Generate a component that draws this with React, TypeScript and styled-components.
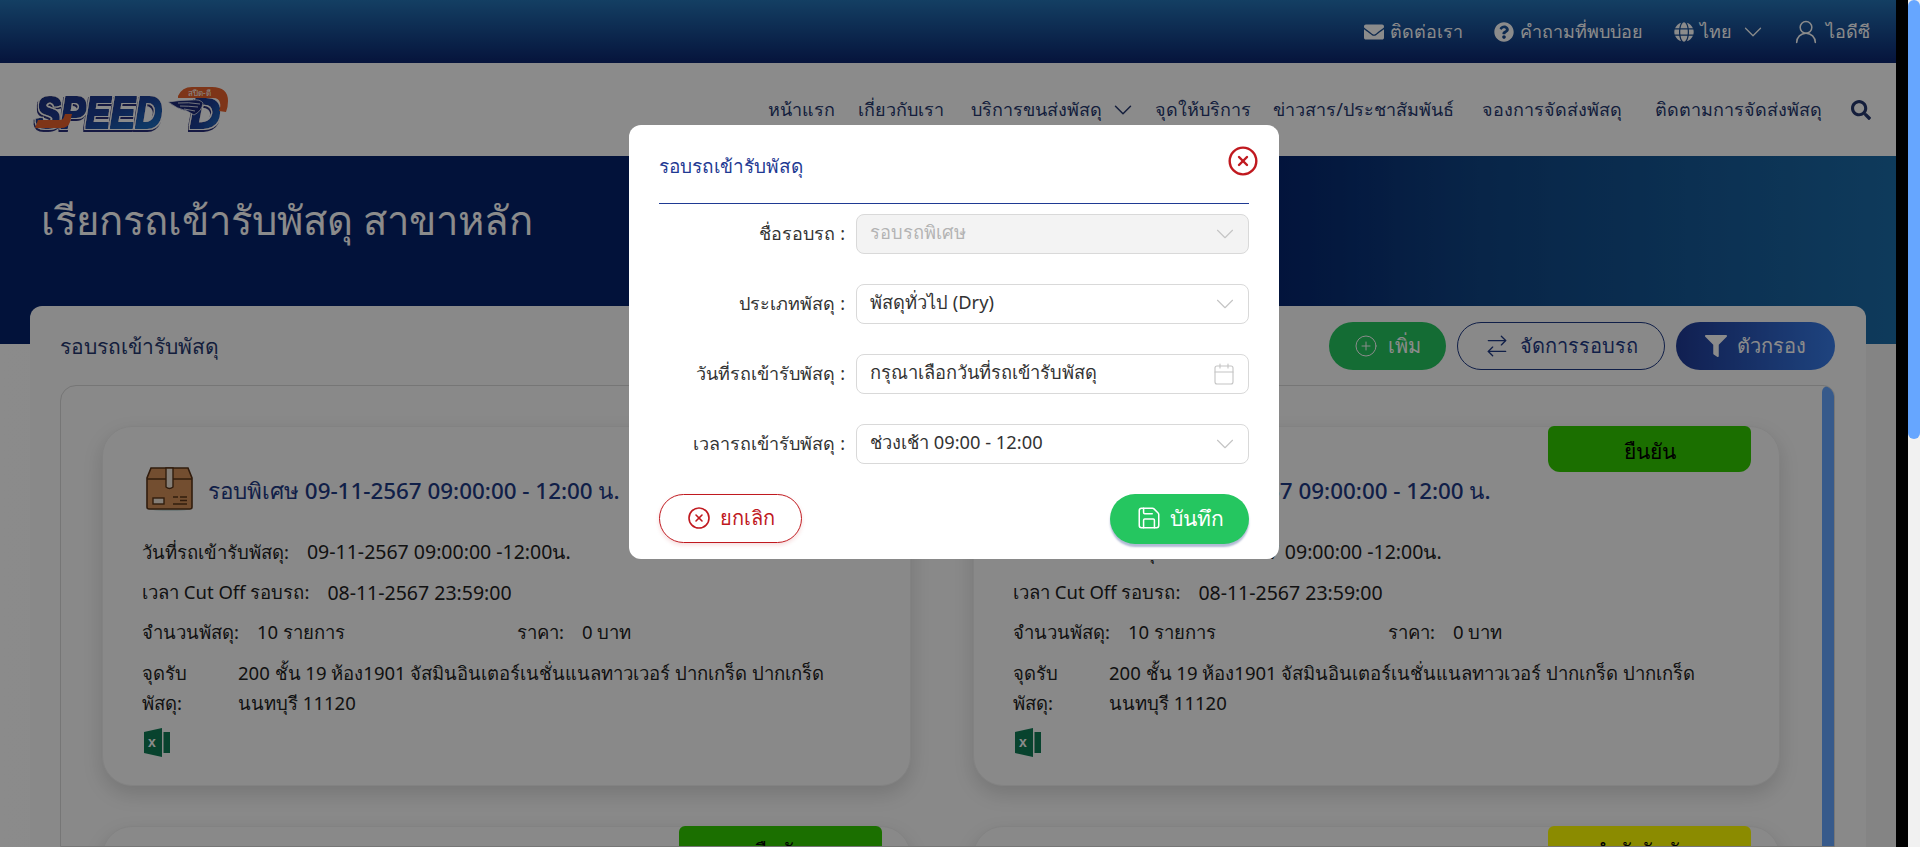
import { ArrowRightLeft, Calendar, ChevronDown, CirclePlus, Save, UserRound, XCircle } from 'lucide-react';
import type { ReactElement, ReactNode } from 'react';
import { FaEnvelope, FaFilter, FaGlobe, FaQuestionCircle, FaSearch } from 'react-icons/fa';
import styled, { createGlobalStyle } from 'styled-components';

const GlobalStyle = createGlobalStyle`
	html,
	body {
		margin: 0;
		height: 100%;
		overflow: hidden;
		background: #fff;
		font-family: 'Noto Sans', 'Open Sans', sans-serif;
	}
	* {
		box-sizing: border-box;
	}
`;

const Shell = styled.div`
	display: flex;
	height: 847px;
	overflow: hidden;
`;

const Stage = styled.div`
	position: relative;
	display: flex;
	width: 1908px;
	height: 847px;
	background: #000;
`;

const Page = styled.div`
	width: 1896px;
	height: 847px;
	overflow: hidden;
	background: linear-gradient(90deg, #fff, #f2f2f2);
	display: flex;
	flex-direction: column;
`;

const WindowScroll = styled.div`
	width: 12px;
	background: #f1f1f1;
`;

const WindowThumb = styled.div`
	height: 439px;
	background: #66a6ff;
	border-radius: 6px;
`;

const TopBar = styled.div`
	flex: none;
	height: 63px;
	display: flex;
	justify-content: flex-end;
	align-items: center;
	gap: 31px;
	padding-right: 26px;
	background: linear-gradient(180deg, #2574b6, #0b256e);
	color: #fff;
	font-size: 18px;
`;

const TopItem = styled.div`
	display: flex;
	align-items: center;
	gap: 6px;
	white-space: nowrap;
`;

const WideChevron = styled(ChevronDown)`
	margin-right: -7px;
`;

const Nav = styled.div`
	flex: none;
	height: 93px;
	display: flex;
	justify-content: space-between;
	align-items: center;
	padding: 0 25px 0 32px;
	background: #fff;
`;

const NavList = styled.div`
	display: flex;
	align-items: center;
	gap: 26px;
	color: #26386f;
	font-size: 18px;
	white-space: nowrap;
`;

const NavItem = styled.span<{ $width?: number }>`
	display: flex;
	align-items: center;
	justify-content: center;
	gap: 4px;
	width: ${(p) => (p.$width ? `${p.$width}px` : 'auto')};
`;

const Hero = styled.div`
	flex: none;
	height: 188px;
	padding: 37px 0 0 41px;
	background: linear-gradient(90deg, #04216b 66%, #0f4484 78%, #1b6ca8 100%);
	color: #fff;
	font-size: 40px;
	font-weight: 500;
	line-height: 54px;
`;

const Panel = styled.div`
	flex: 1;
	min-height: 0;
	display: flex;
	flex-direction: column;
	margin: -38px 30px 0;
	padding: 16px 31px 0 30px;
	background: #fbfbfb;
	border-radius: 12px 12px 0 0;
`;

const PanelHead = styled.div`
	flex: none;
	display: flex;
	justify-content: space-between;
	align-items: center;
	height: 48px;
	margin-bottom: 15px;
`;

const PanelTitle = styled.div`
	color: #26386f;
	font-size: 21px;
`;

const PanelActions = styled.div`
	display: flex;
	gap: 11px;
`;

const ActionButton = styled.div<{ $kind: 'add' | 'manage' | 'filter' }>`
	height: 48px;
	display: flex;
	align-items: center;
	justify-content: center;
	gap: 10px;
	border-radius: 24px;
	font-size: 20px;
	width: ${(p) => (p.$kind === 'add' ? '117px' : p.$kind === 'manage' ? '208px' : '159px')};
	color: ${(p) => (p.$kind === 'manage' ? '#1f3a85' : '#fff')};
	border: ${(p) => (p.$kind === 'manage' ? '1px solid #1f3a85' : 'none')};
	background: ${(p) =>
		p.$kind === 'add'
			? '#25c660'
			: p.$kind === 'filter'
				? 'linear-gradient(90deg, #1f3a95, #387ce8)'
				: 'transparent'};
`;

const ListBox = styled.div`
	flex: 1;
	min-height: 0;
	display: flex;
	overflow: hidden;
	border: 1px solid #d8d8d8;
	border-radius: 16px 12px 0 0;
`;

const CardGrid = styled.div`
	flex: 1;
	display: grid;
	grid-template-columns: 809px 807px;
	grid-auto-rows: 360px;
	column-gap: 62px;
	row-gap: 40px;
	padding: 40px 0 0 41px;
`;

const ListThumb = styled.div`
	flex: none;
	width: 12px;
	background: #66a6ff;
	border-radius: 6px 6px 0 0;
`;

const Card = styled.div`
	position: relative;
	padding: 40px 30px 0 39px;
	border: 1px solid #efefef;
	border-radius: 30px;
	background: #fbfbfb;
	box-shadow: 0 8px 20px rgba(0, 0, 0, 0.14);
	color: #222;
	font-size: 18.5px;
`;

const Badge = styled.div<{ $tone: 'green' | 'yellow' }>`
	position: absolute;
	top: -1px;
	right: 28px;
	width: 203px;
	height: 46px;
	display: flex;
	align-items: center;
	justify-content: center;
	padding-top: 5px;
	border-radius: 6px 6px 12px 12px;
	font-size: 21px;
	color: #000;
	background: ${(p) => (p.$tone === 'green' ? '#33cc00' : '#ffff00')};
`;

const CardHead = styled.div`
	display: flex;
	align-items: center;
	gap: 15px;
	height: 43px;
	margin: 0 0 23px 4px;
`;

const CardTitle = styled.div`
	padding-top: 4px;
	color: #1f3a85;
	font-size: 22.4px;
	font-weight: 500;
	white-space: nowrap;
`;

const InfoRow = styled.div`
	height: 40px;
	display: flex;
	align-items: center;
	gap: 18px;
	padding-bottom: 2px;
	white-space: nowrap;
`;

const DateValue = styled.span`
	font-size: 19.5px;
`;

const HalfRow = styled.div`
	height: 40px;
	display: grid;
	grid-template-columns: 375px 1fr;
	align-items: center;
`;

const AddressRow = styled.div`
	display: grid;
	grid-template-columns: 96px 1fr;
	margin-top: 5px;
	line-height: 30px;
`;

const ExcelWrap = styled.div`
	margin: 10px 0 0 2px;
`;

const Overlay = styled.div`
	position: absolute;
	inset: 0;
	display: flex;
	justify-content: center;
	align-items: flex-start;
	padding-top: 125px;
	background: rgba(0, 0, 0, 0.455);
`;

const Modal = styled.div`
	position: relative;
	width: 650px;
	height: 434px;
	padding: 0 30px;
	background: #fff;
	border-radius: 12px;
`;

const ModalHead = styled.div`
	height: 79px;
	display: flex;
	align-items: center;
	padding-top: 3px;
	border-bottom: 1px solid #1f3a93;
	color: #1f3a93;
	font-size: 19px;
`;

const CloseIcon = styled.div`
	position: absolute;
	top: 20px;
	right: 20px;
	width: 32px;
	height: 32px;
	color: #c0191f;
`;

const Form = styled.div`
	display: flex;
	flex-direction: column;
	gap: 30px;
	padding-top: 10px;
`;

const FormRow = styled.div`
	display: grid;
	grid-template-columns: 186px 1fr;
	column-gap: 11px;
	align-items: center;
`;

const FormLabel = styled.div`
	padding-bottom: 2px;
	text-align: right;
	color: #333;
	font-size: 18px;
	white-space: nowrap;
`;

const Field = styled.div<{ $disabled?: boolean }>`
	height: 40px;
	display: flex;
	justify-content: space-between;
	align-items: center;
	padding: 0 8px 0 13px;
	border: 1px solid #d9d9d9;
	border-radius: 8px;
	font-size: 18.3px;
	color: ${(p) => (p.$disabled ? '#b3b3b3' : '#333')};
	background: ${(p) => (p.$disabled ? '#f3f3f3' : '#fff')};
`;

const FieldText = styled.span`
	padding-bottom: 3px;
`;

const FieldIcon = styled.span`
	display: flex;
	color: #c4c4c4;
`;

const CalendarSlot = styled(FieldIcon)`
	margin-right: 4px;
`;

const ModalFoot = styled.div`
	display: flex;
	justify-content: space-between;
	margin-top: 30px;
`;

const CancelButton = styled.div`
	width: 143px;
	height: 49px;
	display: flex;
	align-items: center;
	justify-content: center;
	gap: 9px;
	padding-bottom: 2px;
	border: 1px solid #c0191f;
	border-radius: 25px;
	color: #c0191f;
	font-size: 20px;
	box-shadow: 0 2px 4px rgba(196, 22, 28, 0.15);
`;

const SaveButton = styled.div`
	width: 139px;
	height: 50px;
	display: flex;
	align-items: center;
	justify-content: center;
	gap: 8px;
	padding-bottom: 2px;
	border-radius: 25px;
	color: #fff;
	font-size: 21px;
	background: #25c660;
	box-shadow: 0 3px 2px rgba(31, 58, 133, 0.35);
`;

function Logo(): ReactElement {
	return (
		<svg width="198" height="46" viewBox="0 0 198 46" aria-label="Speed-D">
			<defs>
				<linearGradient id="logoBlue" x1="0" y1="0" x2="1" y2="1">
					<stop offset="0" stopColor="#1c2a78" />
					<stop offset="0.55" stopColor="#1e3f96" />
					<stop offset="1" stopColor="#1f7fd0" />
				</linearGradient>
				<filter id="logoEdge" x="-6%" y="-10%" width="112%" height="130%">
					<feMorphology in="SourceGraphic" operator="dilate" radius="0.7" result="fat" />
					<feMorphology in="SourceAlpha" operator="dilate" radius="2.2" result="halo" />
					<feFlood floodColor="#ffffff" />
					<feComposite in2="halo" operator="in" result="white" />
					<feOffset in="halo" dx="-1" dy="1.6" result="shifted" />
					<feFlood floodColor="#2a2f7a" />
					<feComposite in2="shifted" operator="in" result="shadow" />
					<feMerge>
						<feMergeNode in="shadow" />
						<feMergeNode in="white" />
						<feMergeNode in="fat" />
					</feMerge>
				</filter>
			</defs>
			<text
				x="4"
				y="41"
				fontFamily="Liberation Sans, sans-serif"
				fontSize="44"
				fontWeight="700"
				fontStyle="italic"
				fill="url(#logoBlue)"
				filter="url(#logoEdge)"
				textLength="126"
				lengthAdjust="spacingAndGlyphs"
			>
				SPEED
			</text>
			<path d="M3 41 l3 -8 h22 q3 0 4 -3 l1 -3 h7 l-2 8 q-2 6 -9 6 z" fill="#e8622c" />
			<text
				x="158"
				y="41"
				fontFamily="Liberation Sans, sans-serif"
				fontSize="42"
				fontWeight="700"
				fontStyle="italic"
				fill="url(#logoBlue)"
				filter="url(#logoEdge)"
			>
				D
			</text>
			<path d="M146 9 q4 -9 14 -9 h20 q16 0 16 14 q0 6 -2 11 l-7 -1 q2 -5 1 -8 q-1 -5 -7 -5 h-35 z" fill="#e8622c" />
			<text x="156" y="9" fontFamily="Noto Sans, sans-serif" fontSize="8" fill="#fff">
				สปีด-ดี
			</text>
			<path d="M136 15 q12 -2 24 -2 q8 -1 11 3 q-1 8 -9 12 l-7 -4 q-10 -2 -19 -9 z" fill="#1c2a78" stroke="#fff" strokeWidth="0.7" />
			<path d="M146 16 q10 -1 22 1 M148 19 q8 0 18 1 M152 22 q6 1 11 2" stroke="#fff" strokeWidth="0.8" fill="none" />
		</svg>
	);
}

function BoxIcon(): ReactElement {
	return (
		<svg width="47" height="44" viewBox="0 0 47 44">
			<ellipse cx="24" cy="42" rx="20" ry="2" fill="#9ec4c4" opacity="0.5" />
			<path d="M5 1 h37 l4 10 v29 q0 2 -2 2 h-41 q-2 0 -2 -2 v-29 z" fill="#d49058" stroke="#5a3418" strokeWidth="1.6" />
			<path d="M1 12 h45" stroke="#5a3418" strokeWidth="1.6" />
			<path d="M20 1 h7 v19 q-3.5 3 -7 0 z" fill="#f2e8da" stroke="#5a3418" strokeWidth="1.4" />
			<rect x="7" y="31" width="11" height="6" fill="#f2e8da" stroke="#5a3418" strokeWidth="1.4" />
			<path d="M27 30 h5 M34 30 h7 M34 33.5 h7 M27 37 h14" stroke="#5a3418" strokeWidth="1.4" />
		</svg>
	);
}

function ExcelIcon(): ReactElement {
	return (
		<svg width="26" height="29" viewBox="0 0 26 29">
			<path d="M0 4 L18 0 V29 L0 25 Z" fill="#0f7b55" />
			<path d="M19.5 4 H26 V25 H19.5 Z" fill="#0f7b55" />
			<text x="4" y="19" fontFamily="Liberation Sans, sans-serif" fontSize="14" fontWeight="700" fill="#fff">
				x
			</text>
		</svg>
	);
}

function Chevron(): ReactElement {
	return (
		<FieldIcon>
			<ChevronDown size={30} strokeWidth={0.9} />
		</FieldIcon>
	);
}

interface RoundCardProps {
	badge?: ReactNode;
}

function RoundCard({ badge }: RoundCardProps): ReactElement {
	return (
		<Card>
			{badge}
			<CardHead>
				<BoxIcon />
				<CardTitle>รอบพิเศษ 09-11-2567 09:00:00 - 12:00 น.</CardTitle>
			</CardHead>
			<InfoRow>
				<span>วันที่รถเข้ารับพัสดุ:</span>
				<DateValue>09-11-2567 09:00:00 -12:00น.</DateValue>
			</InfoRow>
			<InfoRow>
				<span>เวลา Cut Off รอบรถ:</span>
				<DateValue>08-11-2567 23:59:00</DateValue>
			</InfoRow>
			<HalfRow>
				<InfoRow>
					<span>จำนวนพัสดุ:</span>
					<span>10 รายการ</span>
				</InfoRow>
				<InfoRow>
					<span>ราคา:</span>
					<span>0 บาท</span>
				</InfoRow>
			</HalfRow>
			<AddressRow>
				<span>
					จุดรับ
					<br />
					พัสดุ:
				</span>
				<span>
					200 ชั้น 19 ห้อง1901 จัสมินอินเตอร์เนชั่นแนลทาวเวอร์ ปากเกร็ด ปากเกร็ด
					<br />
					นนทบุรี 11120
				</span>
			</AddressRow>
			<ExcelWrap>
				<ExcelIcon />
			</ExcelWrap>
		</Card>
	);
}

export default function App(): ReactElement {
	return (
		<>
			<GlobalStyle />
			<Shell>
				<Stage>
					<Page>
						<TopBar>
							<TopItem>
								<FaEnvelope size={20} />
								ติดต่อเรา
							</TopItem>
							<TopItem>
								<FaQuestionCircle size={20} />
								คำถามที่พบบ่อย
							</TopItem>
							<TopItem>
								<FaGlobe size={20} />
								ไทย
								<WideChevron size={30} strokeWidth={1} />
							</TopItem>
							<TopItem>
								<UserRound size={28} strokeWidth={1.3} />
								ไอดีซี
							</TopItem>
						</TopBar>
						<Nav>
							<Logo />
							<NavList>
								<NavItem $width={62}>หน้าแรก</NavItem>
								<NavItem $width={85}>เกี่ยวกับเรา</NavItem>
								<NavItem>
									<NavItem $width={135}>บริการขนส่งพัสดุ</NavItem>
									<WideChevron size={30} strokeWidth={1.2} />
								</NavItem>
								<NavItem $width={92}>จุดให้บริการ</NavItem>
								<NavItem $width={177}>ข่าวสาร/ประชาสัมพันธ์</NavItem>
								<NavItem $width={148}>จองการจัดส่งพัสดุ</NavItem>
								<NavItem $width={173}>ติดตามการจัดส่งพัสดุ</NavItem>
								<NavItem>
									<FaSearch size={20} />
								</NavItem>
							</NavList>
						</Nav>
						<Hero>เรียกรถเข้ารับพัสดุ สาขาหลัก</Hero>
						<Panel>
							<PanelHead>
								<PanelTitle>รอบรถเข้ารับพัสดุ</PanelTitle>
								<PanelActions>
									<ActionButton $kind="add">
										<CirclePlus size={24} strokeWidth={1} />
										เพิ่ม
									</ActionButton>
									<ActionButton $kind="manage">
										<ArrowRightLeft size={26} strokeWidth={1.2} />
										จัดการรอบรถ
									</ActionButton>
									<ActionButton $kind="filter">
										<FaFilter size={22} />
										ตัวกรอง
									</ActionButton>
								</PanelActions>
							</PanelHead>
							<ListBox>
								<CardGrid>
									<RoundCard />
									<RoundCard badge={<Badge $tone="green">ยืนยัน</Badge>} />
									<RoundCard badge={<Badge $tone="green">ยืนยัน</Badge>} />
									<RoundCard badge={<Badge $tone="yellow">กำลังรับพัสดุ</Badge>} />
								</CardGrid>
								<ListThumb />
							</ListBox>
						</Panel>
					</Page>
					<Overlay>
						<Modal>
							<ModalHead>รอบรถเข้ารับพัสดุ</ModalHead>
							<CloseIcon>
								<XCircle size={32} strokeWidth={1.8} />
							</CloseIcon>
							<Form>
								<FormRow>
									<FormLabel>ชื่อรอบรถ :</FormLabel>
									<Field $disabled>
										<FieldText>รอบรถพิเศษ</FieldText>
										<Chevron />
									</Field>
								</FormRow>
								<FormRow>
									<FormLabel>ประเภทพัสดุ :</FormLabel>
									<Field>
										<FieldText>พัสดุทั่วไป (Dry)</FieldText>
										<Chevron />
									</Field>
								</FormRow>
								<FormRow>
									<FormLabel>วันที่รถเข้ารับพัสดุ :</FormLabel>
									<Field>
										<FieldText>กรุณาเลือกวันที่รถเข้ารับพัสดุ</FieldText>
										<CalendarSlot>
											<Calendar size={24} strokeWidth={1.1} />
										</CalendarSlot>
									</Field>
								</FormRow>
								<FormRow>
									<FormLabel>เวลารถเข้ารับพัสดุ :</FormLabel>
									<Field>
										<FieldText>ช่วงเช้า 09:00 - 12:00</FieldText>
										<Chevron />
									</Field>
								</FormRow>
							</Form>
							<ModalFoot>
								<CancelButton>
									<XCircle size={24} strokeWidth={1.6} />
									ยกเลิก
								</CancelButton>
								<SaveButton>
									<Save size={26} strokeWidth={1.4} />
									บันทึก
								</SaveButton>
							</ModalFoot>
						</Modal>
					</Overlay>
				</Stage>
				<WindowScroll>
					<WindowThumb />
				</WindowScroll>
			</Shell>
		</>
	);
}
